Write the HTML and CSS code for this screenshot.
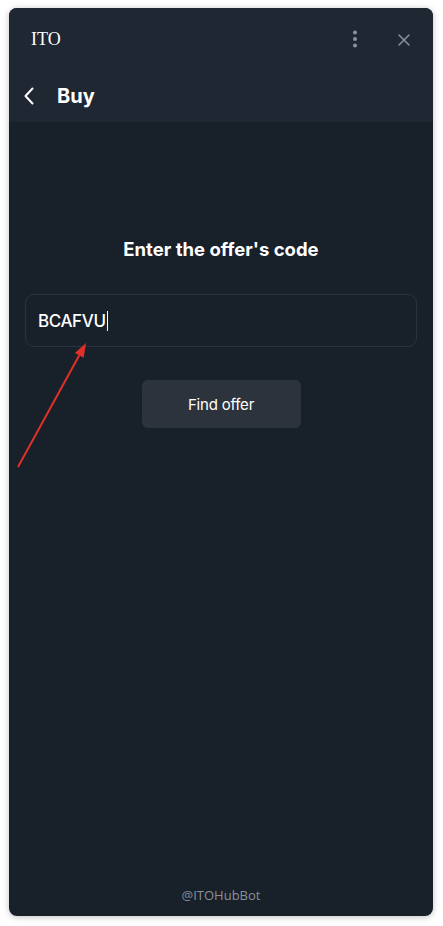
FILE: index.html
```html
<!DOCTYPE html>
<html>
<head>
<meta charset="utf-8">
<link rel="stylesheet" href="styles.css">
</head>
<body>
<div class="window">
  <div class="header">
    <div class="titlebar">
      <span class="app-title">ITO</span>
      <div class="title-actions">
        <svg class="kebab" width="6" height="18" viewBox="0 0 6 18"><circle cx="3" cy="2.5" r="2" fill="#8a929c"/><circle cx="3" cy="9" r="2" fill="#8a929c"/><circle cx="3" cy="15.5" r="2" fill="#8a929c"/></svg>
        <svg class="close" width="12" height="12" viewBox="0 0 12 12"><path d="M1 1L11 11M11 1L1 11" stroke="#8a929c" stroke-width="1.5" stroke-linecap="round"/></svg>
      </div>
    </div>
    <div class="navbar">
      <svg class="back" width="10" height="18" viewBox="0 0 10 18"><path d="M8.5 1.5L1.5 9L8.5 16.5" stroke="#ffffff" stroke-width="2" fill="none" stroke-linecap="round" stroke-linejoin="round"/></svg>
      <span class="nav-title">Buy</span>
    </div>
  </div>
  <div class="content">
    <h1 class="heading">Enter the offer's code</h1>
    <div class="code-input"><span class="code-text">BCAFVU</span><span class="caret"></span></div>
    <button class="find-btn">Find offer</button>
    <div class="spacer"></div>
    <div class="footer">@ITOHubBot</div>
  </div>
  <svg class="arrow" width="90" height="140" viewBox="0 0 90 140"><path d="M9 129L70.3 17.3" stroke="#e0302a" stroke-width="2" fill="none"/><path d="M77 5L74.7 19.7L65.9 14.9Z" fill="#e0302a"/></svg>
</div>
</body>
</html>
```
FILE: styles.css
```css
html, body {
  margin: 0;
  padding: 0;
  background: #ffffff;
}
body {
  padding: 8px 10px 10px 9px;
  height: 926px;
  box-sizing: border-box;
}
.window {
  position: relative;
  width: 424px;
  height: 908px;
  border-radius: 8px;
  overflow: hidden;
  background: #18202a;
  box-shadow: 0 1px 6px rgba(0,0,0,0.25);
  display: flex;
  flex-direction: column;
  font-family: Inter, "Liberation Sans", sans-serif;
  color: #ffffff;
}
.header {
  background: #1f2733;
  height: 114px;
  flex: none;
  display: flex;
  flex-direction: column;
}
.titlebar {
  height: 62px;
  display: flex;
  align-items: center;
  justify-content: space-between;
  padding: 0 23px 0 22px;
}
.app-title {
  font-family: "Liberation Serif", serif;
  font-size: 18px;
  color: #ffffff;
}
.title-actions {
  display: flex;
  align-items: center;
  gap: 40px;
}
.kebab { display: block; }
.close { display: block; margin-top: 1px; }
.navbar {
  height: 52px;
  display: flex;
  align-items: center;
  padding-left: 15px;
}
.back { display: block; margin-right: 23px; }
.nav-title {
  font-size: 20px;
  font-weight: 700;
}
.content {
  flex: 1;
  display: flex;
  flex-direction: column;
  align-items: center;
  padding: 0 16px;
}
.heading {
  margin: 113px 0 0 0;
  font-size: 18.5px;
  font-weight: 700;
  line-height: 28px;
}
.code-input {
  align-self: stretch;
  margin-top: 31px;
  height: 53px;
  box-sizing: border-box;
  border: 1px solid #2b333e;
  border-radius: 9px;
  display: flex;
  align-items: center;
  padding-left: 12px;
}
.code-text {
  font-size: 17px;
  font-weight: 500;
  letter-spacing: -0.4px;
}
.caret {
  width: 1px;
  height: 20px;
  background: #ffffff;
  margin-left: 1px;
}
.find-btn {
  margin-top: 33px;
  width: 159px;
  height: 48px;
  border: none;
  border-radius: 6px;
  background: #2d333c;
  color: #ffffff;
  font-family: Inter, "Liberation Sans", sans-serif;
  font-size: 15px;
  font-weight: 400;
  letter-spacing: -0.2px;
}
.spacer { flex: 1; }
.footer {
  font-family: "Open Sans", sans-serif;
  font-size: 13px;
  color: #8a9099;
  margin-bottom: 12px;
}
.arrow {
  position: absolute;
  left: 0;
  top: 330px;
  overflow: visible;
}
```
